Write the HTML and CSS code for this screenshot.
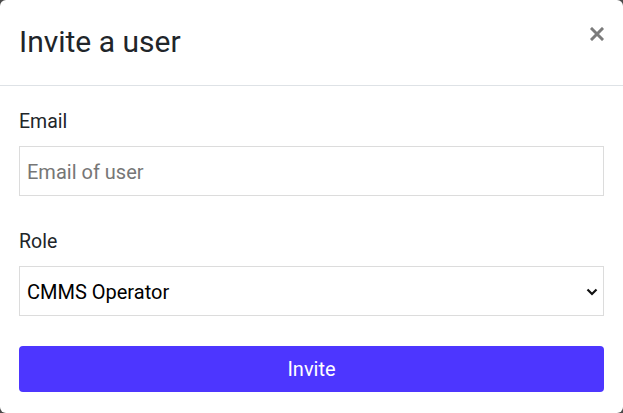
FILE: index.html
```html
<!DOCTYPE html>
<html lang="en">
<head>
<meta charset="utf-8">
<title>Invite a user</title>
<link rel="stylesheet" href="styles.css">
</head>
<body>
<div class="modal">
  <div class="modal-header">
    <h2 class="modal-title">Invite a user</h2>
    <button class="close" aria-label="Close">
      <svg width="14" height="14" viewBox="0 0 14 14"><path d="M2 2 L12 12 M12 2 L2 12" stroke="#7b7b7b" stroke-width="3" stroke-linecap="square"/></svg>
    </button>
  </div>
  <div class="modal-body">
    <div class="field">
      <label class="label">Email</label>
      <input class="control" type="text" placeholder="Email of user">
    </div>
    <div class="field">
      <label class="label">Role</label>
      <div class="select-wrap">
        <select class="control select">
          <option>CMMS Operator</option>
        </select>
        <svg class="chevron" width="12" height="8" viewBox="0 0 12 8"><path d="M1.5 1.5 L6 6 L10.5 1.5" fill="none" stroke="#111" stroke-width="2.2"/></svg>
      </div>
    </div>
    <button class="btn">Invite</button>
  </div>
</div>
</body>
</html>
```
FILE: styles.css
```css
* { box-sizing: border-box; }
html, body { margin: 0; padding: 0; }
body {
  background: #4a4a4a;
  font-family: Roboto, "Noto Sans", sans-serif;
  width: 623px;
  height: 413px;
  overflow: hidden;
}
.modal {
  width: 623px;
  height: 413px;
  background: #fff;
  border-radius: 6px;
  display: flex;
  flex-direction: column;
}
.modal-header {
  height: 86px;
  border-bottom: 1px solid #dee2e6;
  display: flex;
  align-items: flex-start;
  justify-content: space-between;
  padding: 24px 18px 0 19px;
}
.modal-title {
  margin: 0;
  font-size: 30px;
  font-weight: 400;
  line-height: 36px;
  color: #212529;
}
.close {
  border: 0;
  background: none;
  padding: 0;
  margin-top: 2px;
  width: 16px;
  height: 16px;
  display: flex;
  align-items: center;
  justify-content: center;
}
.modal-body {
  padding: 22px 19px 0 19px;
  display: flex;
  flex-direction: column;
}
.field {
  display: flex;
  flex-direction: column;
  margin-bottom: 32px;
}
.field:nth-child(2) { margin-bottom: 30px; }
.label {
  font-size: 19.5px;
  line-height: 27px;
  color: #212529;
  margin-bottom: 11px;
}
.control {
  height: 50px;
  width: 100%;
  border: 1px solid #dcdcdc;
  border-radius: 0;
  padding: 1px 7px 0 7px;
  font-family: Roboto, "Noto Sans", sans-serif;
  font-size: 20px;
  color: #000;
  background: #fff;
  outline: none;
}
.control::placeholder { color: #767676; }
.select-wrap { position: relative; }
.select {
  appearance: none;
  -webkit-appearance: none;
  padding-left: 7px;
}
.chevron {
  position: absolute;
  right: 6px;
  top: 22px;
  pointer-events: none;
}
.btn {
  height: 46px;
  width: 100%;
  border: 0;
  border-radius: 4px;
  background: #4d36ff;
  color: #fff;
  font-family: Roboto, "Noto Sans", sans-serif;
  font-size: 20px;
}
```
